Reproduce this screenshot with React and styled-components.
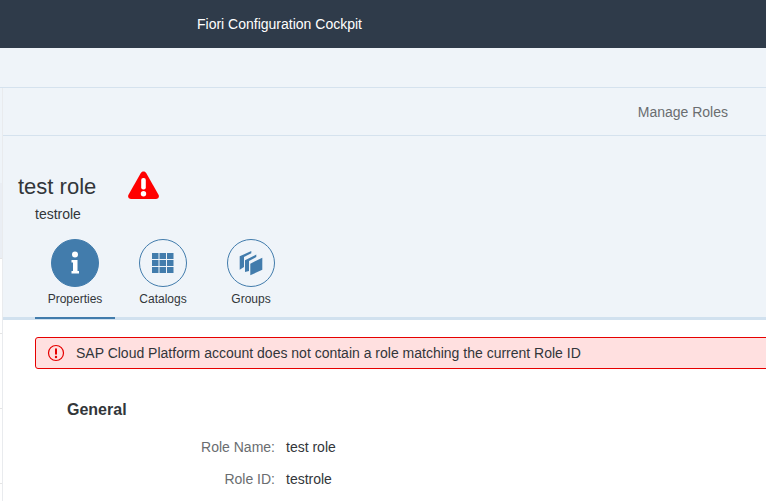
import React from "react";
import styled, { createGlobalStyle } from "styled-components";

const Global = createGlobalStyle`
  html, body { margin: 0; padding: 0; background: #fff; overflow: hidden; }
  body { font-family: "Liberation Sans", Arial, sans-serif; }
`;

const Screen = styled.div`
  width: 766px;
  height: 501px;
  overflow: hidden;
  display: flex;
  flex-direction: column;
`;

const TopBar = styled.header`
  height: 48px;
  flex: none;
  background: #2f3b4a;
  color: #fff;
  display: flex;
  align-items: center;
  padding-left: 197px;
  font-size: 14px;
  padding-bottom: 1px;
  box-sizing: border-box;
`;

const ShellBand = styled.div`
  height: 40px;
  box-sizing: border-box;
  flex: none;
  background: #eff4f9;
  border-bottom: 1px solid #d5e2ee;
`;

const Body = styled.div`
  flex: 1;
  display: flex;
  min-height: 0;
`;

const Rail = styled.div`
  width: 2px;
  flex: none;
  border-right: 1px solid #e9ebee;
  display: flex;
  flex-direction: column;
`;

const RailCell = styled.div`
  height: ${(p) => p.$h}px;
  flex: none;
  background: ${(p) => p.$bg};
  border-bottom: ${(p) => (p.$line ? "1px solid #e5e5e5" : "none")};
  box-sizing: border-box;
`;

const Page = styled.div`
  flex: 1;
  min-width: 0;
  display: flex;
  flex-direction: column;
`;

const Breadcrumb = styled.div`
  height: 48px;
  box-sizing: border-box;
  flex: none;
  background: #eff4f9;
  border-bottom: 1px solid #d5e2ee;
  display: flex;
  align-items: center;
  justify-content: flex-end;
  padding-right: 38px;
  font-size: 14px;
  color: #6a6d70;
`;

const ObjectHeader = styled.div`
  height: 184px;
  flex: none;
  box-sizing: border-box;
  background: #eff4f9;
  border-bottom: 3px solid #d1e1ef;
  padding-top: 33px;
  display: flex;
  flex-direction: column;
`;

const TitleRow = styled.div`
  display: flex;
  align-items: center;
  padding-left: 15px;
  height: 36px;
`;

const Title = styled.h1`
  margin: 0;
  font-size: 22px;
  font-weight: 400;
  color: #32363a;
  width: 109px;
`;

const WarningMark = styled.svg`
  width: 33px;
  height: 32px;
  flex: none;
  margin-top: -2px;
`;

const Subtitle = styled.div`
  font-size: 14px;
  color: #32363a;
  padding-left: 32px;
  margin-top: 1px;
  line-height: 16px;
`;

const Tabs = styled.div`
  display: flex;
  padding-left: 32px;
  margin-top: 17px;
  flex: 1;
`;

const Tab = styled.div`
  width: 80px;
  margin-right: 8px;
  display: flex;
  flex-direction: column;
  align-items: center;
  box-sizing: border-box;
  margin-bottom: -2px;
  border-bottom: 2px solid ${(p) => (p.$active ? "#427cac" : "transparent")};
`;

const TabCircle = styled.div`
  width: 48px;
  height: 48px;
  box-sizing: border-box;
  border-radius: 50%;
  border: 1px solid #427cac;
  background: ${(p) => (p.$active ? "#427cac" : "transparent")};
  color: ${(p) => (p.$active ? "#fff" : "#427cac")};
  display: flex;
  align-items: center;
  justify-content: center;
`;

const TabLabel = styled.div`
  font-size: 12px;
  color: #32363a;
  margin-top: 5px;
  line-height: 14px;
`;

const Content = styled.div`
  flex: 1;
  min-height: 0;
  background: #fff;
  padding: 17px 0 0 32px;
`;

const ErrorStrip = styled.div`
  height: 32px;
  box-sizing: border-box;
  margin-right: -8px;
  background: #ffe0e0;
  border: 1px solid #e60000;
  border-radius: 3px;
  display: flex;
  align-items: center;
  padding-left: 11px;
  gap: 11px;
  font-size: 14px;
  color: #32363a;
`;

const SectionTitle = styled.h2`
  margin: 32px 0 0 32px;
  font-size: 16px;
  font-weight: 700;
  line-height: 18px;
  color: #32363a;
`;

const FormList = styled.dl`
  margin: 20px 0 0;
  display: grid;
  grid-template-columns: 240px 1fr;
  column-gap: 11px;
  row-gap: 16px;
  font-size: 14px;
  line-height: 16px;
`;

const FieldLabel = styled.dt`
  text-align: right;
  color: #6a6d70;
`;

const FieldValue = styled.dd`
  margin: 0;
  color: #32363a;
`;

const WarningIcon = () => (
  <WarningMark viewBox="0 0 33 32" aria-hidden="true">
    <path
      d="M16.500 1.500c1.200 0 2.200.7 2.800 1.700l12.200 21.600c1.100 2-.2 4.200-2.400 4.200H3.900c-2.200 0-3.500-2.200-2.400-4.200L13.700 3.200C14.300 2.200 15.300 1.500 16.500 1.500z"
      fill="#ff0000"
    />
    <rect x="14.200" y="8" width="4.600" height="11.500" rx="2" fill="#fff" />
    <circle cx="16.500" cy="23.700" r="2.700" fill="#fff" />
  </WarningMark>
);

const InfoIcon = () => (
  <svg width="22" height="24" viewBox="0 0 22 24" aria-hidden="true">
    <circle cx="11" cy="3.500" r="3" fill="currentColor" />
    <path d="M7.500 9H13.500V20H15V22.500H7.500V20H9V11.500H7.500z" fill="currentColor" />
  </svg>
);

const GridIcon = () => (
  <svg width="22" height="20" viewBox="0 0 22 20" aria-hidden="true">
    {[0, 7.5, 15].map((x) =>
      [0, 7, 14].map((y) => (
        <rect key={`${x}-${y}`} x={x} y={y} width="6.500" height="6" fill="currentColor" />
      ))
    )}
  </svg>
);

const GroupsIcon = () => (
  <svg width="24" height="25" viewBox="0 0 24 25" aria-hidden="true">
    <path d="M0.700 5.300 12.300 0V2.200L5 6V16L0.700 18.700z" fill="currentColor" />
    <path d="M6 9.300 17.300 3.500V6L10 10V20L6 21z" fill="currentColor" />
    <path d="M11.300 12.700 23.300 6.700V18.700L11.300 24.300z" fill="currentColor" />
  </svg>
);

const ErrorIcon = () => (
  <svg width="18" height="18" viewBox="0 0 18 18" aria-hidden="true">
    <circle cx="9" cy="9" r="7.500" fill="none" stroke="#e60000" strokeWidth="1.200" />
    <rect x="8" y="4.300" width="2" height="6.500" rx="1" fill="#e60000" />
    <circle cx="9" cy="13" r="1.200" fill="#e60000" />
  </svg>
);

const rail = [
  { h: 95, bg: "#eff4f9" },
  { h: 75, bg: "#eaeef4" },
  { h: 1, bg: "#e5e5e5" },
  { h: 75, bg: "#fff", line: true },
  { h: 75, bg: "#fff", line: true },
  { h: 75, bg: "#fff", line: true },
  { h: 18, bg: "#fff" },
];

export default function App() {
  return (
    <Screen>
      <Global />
      <TopBar>Fiori Configuration Cockpit</TopBar>
      <ShellBand />
      <Body>
        <Rail>
          {rail.map((c, i) => (
            <RailCell key={i} $h={c.h} $bg={c.bg} $line={c.line} />
          ))}
        </Rail>
        <Page>
          <Breadcrumb>Manage Roles</Breadcrumb>
          <ObjectHeader>
            <TitleRow>
              <Title>test role</Title>
              <WarningIcon />
            </TitleRow>
            <Subtitle>testrole</Subtitle>
            <Tabs>
              <Tab $active>
                <TabCircle $active><InfoIcon /></TabCircle>
                <TabLabel>Properties</TabLabel>
              </Tab>
              <Tab>
                <TabCircle><GridIcon /></TabCircle>
                <TabLabel>Catalogs</TabLabel>
              </Tab>
              <Tab>
                <TabCircle><GroupsIcon /></TabCircle>
                <TabLabel>Groups</TabLabel>
              </Tab>
            </Tabs>
          </ObjectHeader>
          <Content>
            <ErrorStrip>
              <ErrorIcon />
              SAP Cloud Platform account does not contain a role matching the current Role ID
            </ErrorStrip>
            <SectionTitle>General</SectionTitle>
            <FormList>
              <FieldLabel>Role Name:</FieldLabel>
              <FieldValue>test role</FieldValue>
              <FieldLabel>Role ID:</FieldLabel>
              <FieldValue>testrole</FieldValue>
            </FormList>
          </Content>
        </Page>
      </Body>
    </Screen>
  );
}
